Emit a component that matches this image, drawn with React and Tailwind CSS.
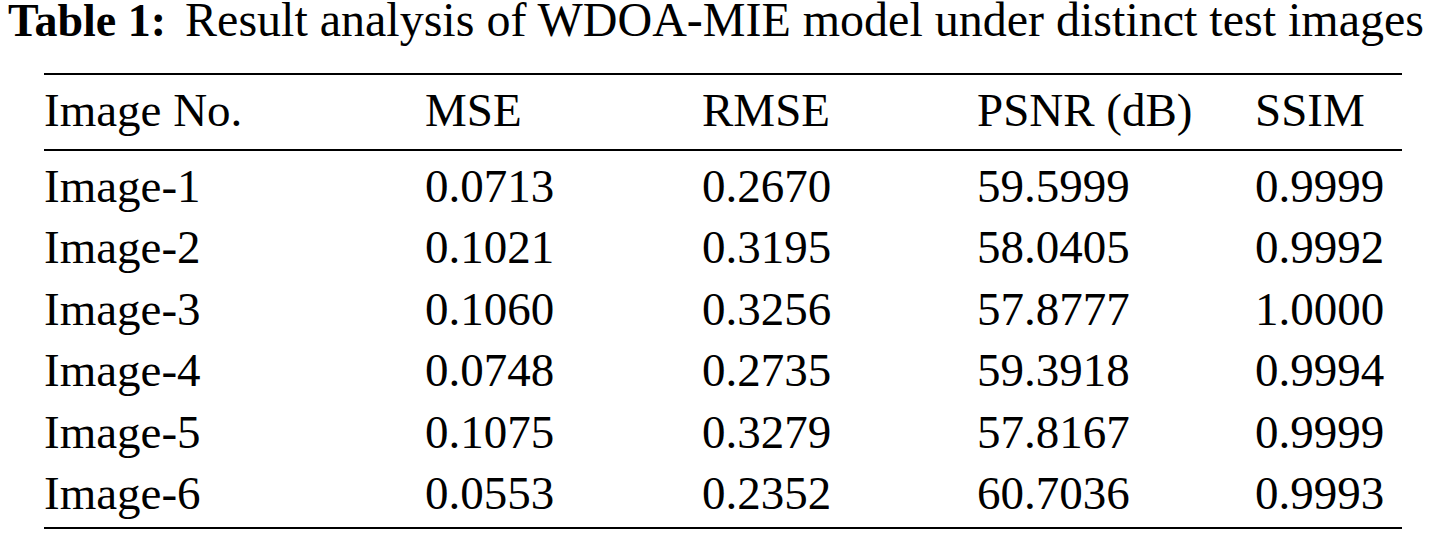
const columns = ['Image No.', 'MSE', 'RMSE', 'PSNR (dB)', 'SSIM'];

const rows = [
  ['Image-1', '0.0713', '0.2670', '59.5999', '0.9999'],
  ['Image-2', '0.1021', '0.3195', '58.0405', '0.9992'],
  ['Image-3', '0.1060', '0.3256', '57.8777', '1.0000'],
  ['Image-4', '0.0748', '0.2735', '59.3918', '0.9994'],
  ['Image-5', '0.1075', '0.3279', '57.8167', '0.9999'],
  ['Image-6', '0.0553', '0.2352', '60.7036', '0.9993'],
];

const grid = 'grid grid-cols-[381px_277px_275px_278px_147px]';

export default function App() {
  return (
    <div className="w-[1433px] h-[533px] bg-white text-black font-['Liberation_Serif',serif] overflow-hidden">
      <p className="pl-[8px] text-[48px] leading-[40px] whitespace-nowrap">
        <b className="text-[46px]">Table 1:</b>
        <span className="ml-[19px]">Result analysis of WDOA-MIE model under distinct test images</span>
      </p>

      <div className="ml-[44px] w-[1358px] mt-[32px] text-[47px]">
        <div className="h-[2px] bg-black" />
        <div className={`${grid} pt-[5px] pb-[7px] leading-[61.5px]`}>
          {columns.map((c) => (
            <div key={c} className="whitespace-nowrap">{c}</div>
          ))}
        </div>
        <div className="h-[2px] bg-black" />
        <div className="pt-[5px] leading-[61.5px]">
          {rows.map((r) => (
            <div key={r[0]} className={grid}>
              {r.map((v, i) => (
                <div key={i}>{v}</div>
              ))}
            </div>
          ))}
        </div>
        <div className="h-[2px] bg-black mt-[2px]" />
      </div>
    </div>
  );
}
